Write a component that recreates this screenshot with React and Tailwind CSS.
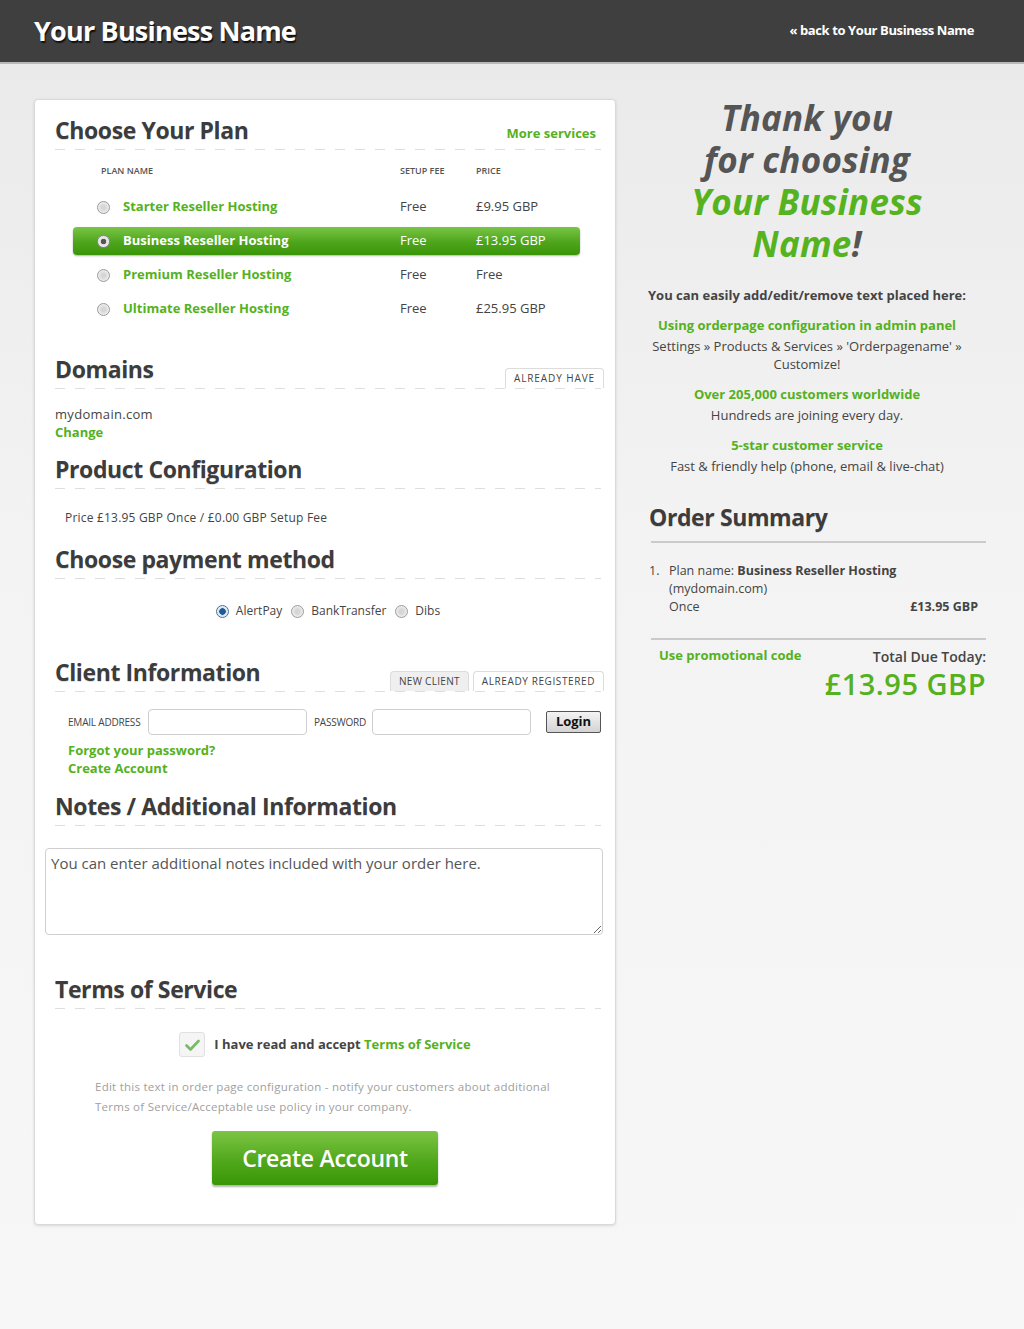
import React from 'react';

const FONT = { fontFamily: '"Open Sans", "Noto Sans", "DejaVu Sans", sans-serif' };

function Dash({ className = '' }) {
  return (
    <div className={`h-px bg-[linear-gradient(to_right,#dedede_0_10px,transparent_10px_20px)] bg-[length:20px_1px] bg-repeat-x ${className}`} />
  );
}

function SectionHead({ title, right, className = '' }) {
  return (
    <div className={className}>
      <div className="flex items-end justify-between">
        <h2 className="text-[23px] font-bold leading-[38px] tracking-[-0.4px] text-[#3c3c3c] [text-shadow:0_1px_0_rgba(0,0,0,0.15)]">{title}</h2>
        {right}
      </div>
      <Dash />
    </div>
  );
}

function Radio({ checked, onGreen }) {
  return (
    <span
      className={`inline-block w-[13px] h-[13px] rounded-full border ${
        onGreen ? 'border-[#8a8a8a] bg-[radial-gradient(circle,#555_0_2.5px,#dcdcdc_3px,#f4f4f4_6px)]' : checked ? 'border-[#4b6f8f] bg-[radial-gradient(circle,#1f5c96_0_3px,#cfe0ef_3.5px,#f2f6fa_6px)]' : 'border-[#9a9a9a] bg-[radial-gradient(circle,#d6d6d6_0_2px,#f2f2f2_6px)]'
      }`}
    />
  );
}

const plans = [
  { name: 'Starter Reseller Hosting', setup: 'Free', price: '£9.95 GBP' },
  { name: 'Business Reseller Hosting', setup: 'Free', price: '£13.95 GBP', selected: true },
  { name: 'Premium Reseller Hosting', setup: 'Free', price: 'Free' },
  { name: 'Ultimate Reseller Hosting', setup: 'Free', price: '£25.95 GBP' },
];

export default function App() {
  return (
    <div style={FONT} className="min-h-[1329px] bg-[linear-gradient(to_bottom,#e9e9e9,#f3f3f3_40%,#f7f7f7)] text-[#444]">
      {/* header */}
      <header className="h-[64px] bg-[#3f3f3f] border-b-2 border-[#b9b9b9] flex items-center justify-between pl-[34px] pr-[50px]">
        <h1 className="text-[27px] font-bold tracking-[-0.8px] text-white [text-shadow:1px_2px_1px_#111]">Your Business Name</h1>
        <a className="text-[13px] font-bold tracking-[-0.4px] text-white">« back to Your Business Name</a>
      </header>

      <main className="flex items-start pl-[34px] pt-[35px]">
        {/* left card */}
        <div className="w-[582px] bg-white border border-[#d9d9d9] rounded-[4px] shadow-[0_1px_3px_rgba(0,0,0,0.12)] pl-[20px] pr-[14px] pt-[11px] pb-[39px]">
          <SectionHead
            title="Choose Your Plan"
            right={<a className="text-[13px] font-bold text-[#55b11e] mb-[6px] mr-[5px]">More services</a>}
          />

          <div className="mt-[13px] pl-[18px] pr-[21px]">
            <div className="flex items-center h-[15px] text-[9px] font-semibold uppercase text-[#555]">
              <span className="pl-[28px] w-[327px]">Plan name</span>
              <span className="w-[76px]">Setup fee</span>
              <span>Price</span>
            </div>
            <div className="mt-[15px] flex flex-col gap-[6px]">
              {plans.map(p => (
                <div
                  key={p.name}
                  className={`flex items-center h-[28px] rounded-[4px] text-[13px] ${
                    p.selected
                      ? 'bg-[linear-gradient(to_bottom,#79c545,#4ea51c_55%,#3a9508)] text-white shadow-[0_1px_2px_rgba(0,0,0,0.3)]'
                      : 'text-[#444]'
                  }`}
                >
                  <span className="w-[50px] pl-[24px] flex items-center"><Radio onGreen={p.selected} /></span>
                  <span className={`w-[277px] font-bold ${p.selected ? 'text-white' : 'text-[#55b11e]'}`}>{p.name}</span>
                  <span className="w-[76px]">{p.setup}</span>
                  <span>{p.price}</span>
                </div>
              ))}
            </div>
          </div>

          <SectionHead
            className="mt-[27px]"
            title="Domains"
            right={
              <span className="mr-[-3px] h-[20px] px-[8px] flex items-center border border-b-0 border-[#dcdcdc] rounded-t-[4px] bg-white text-[10px] tracking-[0.9px] text-[#444]">
                ALREADY HAVE
              </span>
            }
          />
          <div className="mt-[16px] text-[13px] leading-[18px] tracking-[0.3px] text-[#444]">mydomain.com</div>
          <a className="block text-[13px] leading-[18px] font-bold text-[#55b11e]">Change</a>

          <SectionHead className="mt-[9px]" title="Product Configuration" />
          <div className="mt-[20px] pl-[10px] text-[12px] leading-[18px] tracking-[0.2px] text-[#444]">Price £13.95 GBP Once / £0.00 GBP Setup Fee</div>

          <SectionHead className="mt-[13px]" title="Choose payment method" />
          <div className="mt-[23px] h-[18px] flex items-center justify-center gap-[9px] text-[12px] text-[#444]">
            <span className="flex items-center gap-[7px]"><Radio checked /> AlertPay</span>
            <span className="flex items-center gap-[7px]"><Radio /> BankTransfer</span>
            <span className="flex items-center gap-[7px]"><Radio /> Dibs</span>
          </div>

          <SectionHead
            className="mt-[33px]"
            title="Client Information"
            right={
              <div className="flex gap-[4px] mr-[-3px]">
                <span className="h-[20px] px-[8px] flex items-center border border-b-0 border-[#dcdcdc] rounded-t-[4px] bg-[#efefef] text-[10px] tracking-[0.3px] text-[#444]">NEW CLIENT</span>
                <span className="h-[20px] px-[8px] flex items-center border border-b-0 border-[#dcdcdc] rounded-t-[4px] bg-white text-[10px] tracking-[0.6px] text-[#444]">ALREADY REGISTERED</span>
              </div>
            }
          />
          <div className="mt-[17px] pl-[13px] flex items-center text-[10px] text-[#444] whitespace-nowrap">
            <span className="shrink-0 w-[76px] tracking-[-0.2px]">EMAIL ADDRESS</span>
            <input className="shrink-0 ml-[4px] w-[159px] h-[26px] border border-[#cfcfcf] rounded-[4px] bg-white" />
            <span className="shrink-0 ml-[7px] w-[54px] tracking-[-0.2px]">PASSWORD</span>
            <input className="shrink-0 ml-[4px] w-[159px] h-[26px] border border-[#cfcfcf] rounded-[4px] bg-white" />
            <button className="shrink-0 ml-[15px] h-[22px] w-[55px] border border-[#555] rounded-[2px] bg-[linear-gradient(to_bottom,#f4f4f4,#d3d3d3)] text-[13px] font-bold text-[#111]">Login</button>
          </div>
          <div className="mt-[6px] pl-[13px] text-[13px] font-bold leading-[18px] text-[#55b11e]">
            <a className="block">Forgot your password?</a>
            <a className="block">Create Account</a>
          </div>

          <SectionHead className="mt-[10px]" title="Notes / Additional Information" />
          <textarea
            className="block mt-[22px] ml-[-10px] w-[558px] h-[87px] border border-[#cfcfcf] rounded-[4px] px-[5px] py-[3px] text-[15px] text-[#555] outline-none"
            defaultValue="You can enter additional notes included with your order here."
          />

          <SectionHead className="mt-[35px]" title="Terms of Service" />
          <div className="mt-[23px] flex items-center justify-center gap-[9px] pr-[6px]">
            <span className="w-[26px] h-[25px] rounded-[3px] border border-[#e0e0e0] bg-[#f5f5f5] flex items-center justify-center">
              <svg width="15" height="12" viewBox="0 0 15 12">
                <path d="M1.5 6.5 L5.5 10.5 L13.5 2" fill="none" stroke="#77bb66" strokeWidth="2.6" strokeLinecap="round" strokeLinejoin="round" />
              </svg>
            </span>
            <span className="text-[13px] font-bold text-[#444]">
              I have read and accept <a className="text-[#55b11e]">Terms of Service</a>
            </span>
          </div>
          <p className="mt-[20px] pl-[40px] pr-[40px] text-[11.5px] leading-[20px] tracking-[0.25px] text-[#a0a0a0]">
            Edit this text in order page configuration - notify your customers about additional Terms of Service/Acceptable use policy in your company.
          </p>
          <div className="mt-[14px] flex justify-center pr-[6px]">
            <button className="w-[226px] h-[54px] rounded-[3px] bg-[linear-gradient(to_bottom,#7cc444,#51a81c_55%,#389606)] shadow-[0_2px_2px_rgba(0,0,0,0.3)] text-white text-[23px] font-semibold tracking-[-0.3px]">
              Create Account
            </button>
          </div>
        </div>

        {/* right column */}
        <aside className="w-[370px] ml-[6px]">
          <div className="-mt-[2px] text-center italic font-bold text-[35px] leading-[42px] tracking-[0.2px]">
            <div className="text-[#555]">Thank you</div>
            <div className="text-[#555]">for choosing</div>
            <div className="text-[#56b320]">Your Business</div>
            <div><span className="text-[#56b320]">Name</span><span className="text-[#555]">!</span></div>
          </div>
          <div className="mt-[21px] text-center text-[13px] leading-[18px] text-[#444]">
            <p className="font-bold">You can easily add/edit/remove text placed here:</p>
            <p className="mt-[12px] font-bold text-[#55b11e]">Using orderpage configuration in admin panel</p>
            <p className="mt-[3px] px-[10px]">Settings » Products &amp; Services » 'Orderpagename' » Customize!</p>
            <p className="mt-[12px] font-bold text-[#55b11e]">Over 205,000 customers worldwide</p>
            <p className="mt-[3px]">Hundreds are joining every day.</p>
            <p className="mt-[12px] font-bold text-[#55b11e]">5-star customer service</p>
            <p className="mt-[3px]">Fast &amp; friendly help (phone, email &amp; live-chat)</p>
          </div>

          <div className="mt-[27px] pl-[27px] pr-[6px]">
            <h2 className="text-[23px] font-bold leading-[30px] tracking-[-0.4px] text-[#3c3c3c] [text-shadow:0_1px_0_rgba(0,0,0,0.15)]">Order Summary</h2>
            <div className="mt-[9px] ml-[2px] h-[2px] bg-[#cacaca]" />
            <div className="mt-[19px] flex text-[12.5px] leading-[18px] text-[#444]">
              <span className="w-[20px]">1.</span>
              <div className="flex-1 pr-[8px]">
                <div>Plan name: <b className="font-bold">Business Reseller Hosting</b></div>
                <div>(mydomain.com)</div>
                <div className="flex justify-between"><span>Once</span><b className="font-bold">£13.95 GBP</b></div>
              </div>
            </div>
            <div className="mt-[22px] ml-[2px] h-[2px] bg-[#cacaca]" />
            <div className="mt-[6px] flex items-start justify-between">
              <a className="pl-[10px] text-[13px] font-bold text-[#55b11e]">Use promotional code</a>
              <div className="text-right">
                <div className="text-[14px] font-semibold text-[#444]">Total Due Today:</div>
                <div className="text-[29px] leading-[34px] font-semibold text-[#55b11e] tracking-[0.5px]">£13.95 GBP</div>
              </div>
            </div>
          </div>
        </aside>
      </main>
    </div>
  );
}
